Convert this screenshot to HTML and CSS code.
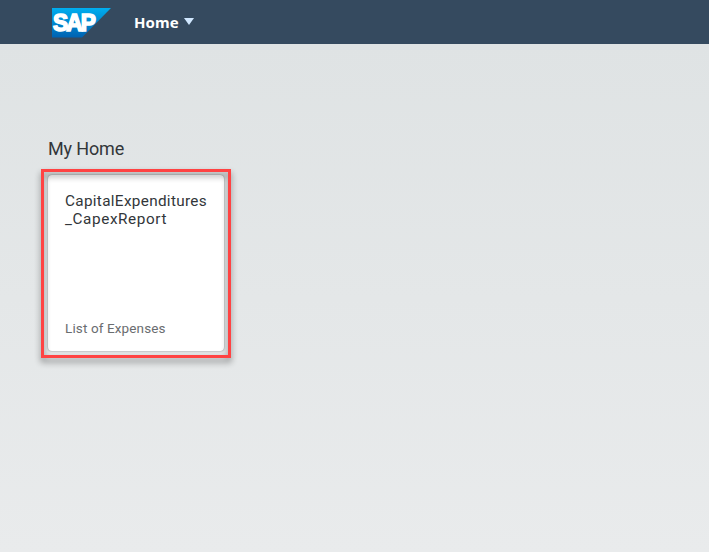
FILE: index.html
```html
<!DOCTYPE html>
<html lang="en">
<head>
<meta charset="utf-8">
<title>Home</title>
<link rel="stylesheet" href="styles.css">
</head>
<body>
<header class="shell-header">
  <svg class="logo" width="59" height="30" viewBox="0 0 59 30" role="img" aria-label="SAP">
    <defs>
      <linearGradient id="logo-fill" x1="0" y1="0" x2="0" y2="1">
        <stop offset="0" stop-color="#00aeef"/>
        <stop offset="1" stop-color="#0062b1"/>
      </linearGradient>
    </defs>
    <path d="M0 0H59L30 29.5H0Z" fill="url(#logo-fill)"/>
    <text class="logo-text" x="1" y="23.3" textLength="41" lengthAdjust="spacingAndGlyphs">SAP</text>
  </svg>
  <button class="shell-title" type="button"><span>Home</span>
    <svg class="caret" width="10" height="7" viewBox="0 0 10 7"><path d="M0 0H10L5 7Z"/></svg>
  </button>
</header>
<main class="launchpad">
  <h1 class="group-title">My Home</h1>
  <article class="tile">
    <h2 class="tile-title">CapitalExpenditures<br><span class="second-line">_CapexReport</span></h2>
    <p class="tile-footer">List of Expenses</p>
    <div class="highlight"></div>
  </article>
</main>
</body>
</html>
```
FILE: styles.css
```css
* { box-sizing: border-box; }
body {
  margin: 0;
  min-height: 552px;
  display: flex;
  flex-direction: column;
  font-family: Roboto, "Liberation Sans", sans-serif;
  color: #32363a;
}
.shell-header {
  height: 44px;
  padding: 8px 0 0 52px;
  display: flex;
  align-items: flex-start;
  background: #354a5f;
}
.logo { flex: none; }
.logo-text {
  font: 700 24px "Liberation Sans", sans-serif;
  letter-spacing: -2px;
  fill: #fff;
  stroke: #fff;
  stroke-width: 1.6px;
}
.shell-title {
  display: flex;
  align-items: center;
  gap: 5px;
  height: 27px;
  margin-left: 23px;
  padding: 0;
  border: 0;
  background: none;
  color: #fff;
  font: 700 15px "Noto Sans", sans-serif;
  letter-spacing: 0.05px;
}
.caret { fill: #d1e8ff; }
.launchpad {
  flex: 1;
  padding: 93px 48px 0;
  background: linear-gradient(#dfe3e4, #e9ebec);
}
.group-title {
  margin: 0 0 14px;
  font-size: 18px;
  line-height: 24px;
  font-weight: 400;
  letter-spacing: -0.15px;
}
.tile {
  position: relative;
  display: flex;
  flex-direction: column;
  justify-content: space-between;
  width: 176px;
  height: 176px;
  padding: 17px 17px 13px;
  border-radius: 4px;
  background: #fff;
  box-shadow: 0 0 2px rgba(0, 0, 0, 0.45);
}
.tile-title {
  margin: 0;
  font-size: 15.3px;
  line-height: 18px;
  font-weight: 370;
  letter-spacing: 0.32px;
}
.second-line { letter-spacing: 0.6px; }
.tile-footer {
  margin: 0;
  font-size: 13.5px;
  line-height: 20px;
  letter-spacing: 0.12px;
  color: #6a6d70;
}
.highlight {
  position: absolute;
  inset: -6px -7px -7px;
  border: 3px solid #ff4343;
  filter: drop-shadow(0 4px 3px rgba(0, 0, 0, 0.45));
}
```
